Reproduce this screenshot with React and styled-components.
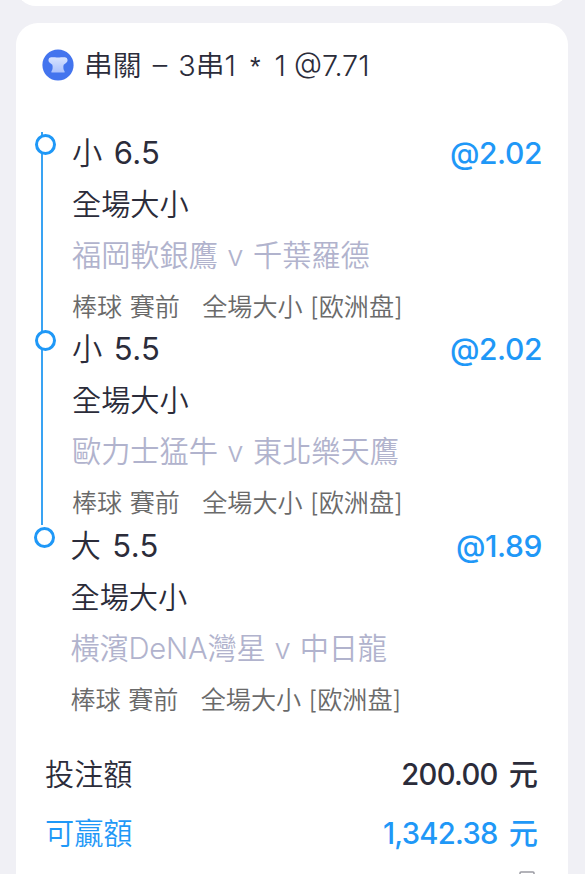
import React from 'react'
import styled, { createGlobalStyle } from 'styled-components'

const GlobalStyle = createGlobalStyle`
  * {
    box-sizing: border-box;
  }

  body {
    margin: 0;
    background: #f0f0f5;
    color: #2b2c3a;
    font-family: Inter, "Noto Sans CJK TC", sans-serif;
    overflow: hidden;
  }

  p, h2 {
    margin: 0;
    font-weight: 350;
  }
`

const Page = styled.main`
  height: 874px;
  padding: 0 17px 0 16px;
  display: flex;
  flex-direction: column;
  gap: 17px;
  overflow: hidden;
`

const PreviousCard = styled.div`
  height: 6px;
  flex-shrink: 0;
  overflow: hidden;
  display: flex;
  align-items: flex-end;

  &::after {
    content: '';
    flex: 1;
    height: 40px;
    background: #fff;
    border-radius: 22px;
  }
`

const Card = styled.section`
  height: 900px;
  flex-shrink: 0;
  background: #fff;
  border-radius: 22px 22px 0 0;
`

const CardHeader = styled.header`
  height: 109px;
  padding: 26px 0 0 26px;
  display: flex;
  align-items: flex-start;
  gap: 10px;

  svg {
    display: block;
    flex-shrink: 0;
  }
`

const CardTitle = styled.h2`
  font-size: 28.8px;
  line-height: 34px;
  white-space: pre;
`

const Combo = styled.span`
  word-spacing: 3px;
`

const Times = styled.span`
  font-family: "Liberation Sans", sans-serif;
  margin: 0 6px 0 3px;
  font-size: 27px;
`

const Leg = styled.article`
  height: 196.4px;
  margin-left: ${({ $last }) => ($last ? 23.5 : 25)}px;
  padding-right: 26px;
  border-left: 2px solid ${({ $last }) => ($last ? 'transparent' : '#39a3f3')};
  display: flex;
  gap: 16px;
`

const Dot = styled.span`
  width: 21px;
  height: 21px;
  margin: 2px 0 0 -8px;
  flex-shrink: 0;
  border: 3px solid #1f98f7;
  border-radius: 50%;
  background: #fff;
`

const LegBody = styled.div`
  flex: 1;
  margin-top: -5px;
  white-space: pre;
`

const Pick = styled.div`
  height: 52px;
  display: flex;
  justify-content: space-between;
  line-height: 52px;
  font-size: 30.3px;
  font-weight: 350;
  word-spacing: 3px;
`

const Line = styled.span`
  font-size: 31px;
  font-weight: 400;
  letter-spacing: 0.3px;
`

const Odds = styled.strong`
  color: #1f98f7;
  font-size: 30px;
  font-weight: 500;
  letter-spacing: -0.4px;
`

const Market = styled.p`
  height: 51px;
  line-height: 51px;
  font-size: 29.2px;
`

const Teams = styled.p`
  height: 52px;
  line-height: 52px;
  font-size: 29.2px;
  letter-spacing: ${({ $tight }) => ($tight ? -0.2 : 0)}px;
  word-spacing: 1.2px;
  color: #b1b3cd;
`

const Meta = styled.p`
  height: 50px;
  line-height: 50px;
  font-size: 25.1px;
  word-spacing: 0.4px;
  color: #6a6a6a;
`

const Totals = styled.footer`
  padding: 21px 30px 0 29px;
`

const TotalRow = styled.div`
  height: 59px;
  display: flex;
  justify-content: space-between;
  align-items: center;
  font-size: 29.2px;
  font-weight: 350;
  color: ${({ $win }) => ($win ? '#1f98f7' : '#2b2c3a')};
  white-space: pre;
`

const Amount = styled.span`
  font-weight: 480;
  letter-spacing: -0.7px;
  word-spacing: 4px;
`

const Unit = styled.span`
  font-weight: 500;
  letter-spacing: 0;
`

const Actions = styled.div`
  padding-top: 11px;
  display: flex;
  justify-content: flex-end;
`

const legs = [
  { side: '小', line: '6.5', odds: '@2.02', teams: '福岡軟銀鷹 v 千葉羅德' },
  { side: '小', line: '5.5', odds: '@2.02', teams: '歐力士猛牛 v 東北樂天鷹' },
  { side: '大', line: '5.5', odds: '@1.89', teams: '橫濱DeNA灣星 v 中日龍' },
]

const ShirtBadge = () => (
  <svg width="32" height="32" viewBox="0 0 32 32">
    <defs>
      <linearGradient id="shirt" x1="0" y1="0" x2="0" y2="1">
        <stop offset="0" stopColor="#d7e3ff" />
        <stop offset="1" stopColor="#a9c0fc" />
      </linearGradient>
    </defs>
    <circle cx="16" cy="16" r="15.6" fill="#4374ee" />
    <path
      d="M9 8.2H13Q16 8.8 19 8.2H23Q25.4 8.5 25.6 11Q25.6 13 24 14L21.7 15.8Q21.2 17 21.4 19.3Q21.6 21.2 22.6 22.3V23.5H9.4V22.3Q10.4 21.2 10.6 19.3Q10.8 17 10.3 15.8L8 14Q6.4 13 6.4 11Q6.6 8.5 9 8.2Z"
      fill="url(#shirt)"
    />
  </svg>
)

const App = () => {
  return (
    <Page>
      <GlobalStyle />
      <PreviousCard />
      <Card>
        <CardHeader>
          <ShirtBadge />
          <CardTitle>
            <Combo>串關 – 3串1 </Combo>
            <Times>*</Times>
            {' 1 @7.71'}
          </CardTitle>
        </CardHeader>

        {legs.map((leg, i) => (
          <Leg key={leg.teams} $last={i === legs.length - 1}>
            <Dot />
            <LegBody>
              <Pick>
                <span>{leg.side} <Line>{leg.line}</Line></span>
                <Odds>{leg.odds}</Odds>
              </Pick>
              <Market>全場大小</Market>
              <Teams $tight={i === legs.length - 1}>{leg.teams}</Teams>
              <Meta lang="zh-Hans">{'棒球 賽前   全場大小 [欧洲盘]'}</Meta>
            </LegBody>
          </Leg>
        ))}

        <Totals>
          <TotalRow>
            <span>投注額</span>
            <Amount>200.00 <Unit>元</Unit></Amount>
          </TotalRow>
          <TotalRow $win>
            <span>可贏額</span>
            <Amount>1,342.38 <Unit>元</Unit></Amount>
          </TotalRow>
          <Actions>
            <svg width="22" height="24" viewBox="0 0 22 24" fill="none" stroke="#9a9ba3" strokeWidth="1.5">
              <rect x="4" y="1" width="14" height="16" rx="1" />
            </svg>
          </Actions>
        </Totals>
      </Card>
    </Page>
  )
}

export default App
